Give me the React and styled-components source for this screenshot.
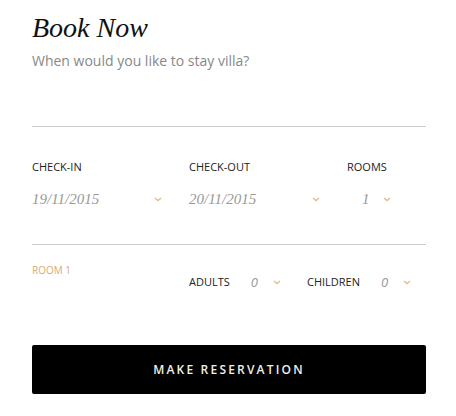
import React from 'react';
import styled, { createGlobalStyle } from 'styled-components';

const GlobalStyle = createGlobalStyle`
  body {
    margin: 0;
    background: #fff;
    font-family: 'Open Sans', sans-serif;
  }
`;

const Panel = styled.div`
  width: 394px;
  padding: 12px 0 0 32px;
`;

const Title = styled.h2`
  margin: 0;
  font-family: 'Liberation Serif', serif;
  font-style: italic;
  font-weight: normal;
  font-size: 28px;
  line-height: 32px;
  color: #111;
`;

const Subtitle = styled.p`
  margin: 7px 0 0;
  font-size: 14px;
  line-height: 20px;
  color: #888;
`;

const Divider = styled.hr`
  margin: ${(p) => p.$top}px 0 0;
  border: 0;
  border-top: 1px solid #ccc;
  width: 394px;
`;

const Fields = styled.div`
  display: grid;
  grid-template-columns: 157px 158px 79px;
  padding-top: 32px;
`;

const Field = styled.div`
  display: flex;
  flex-direction: column;
`;

const Label = styled.span`
  font-size: 11px;
  line-height: 16px;
  text-transform: uppercase;
  color: #222;
`;

const Select = styled.div`
  display: flex;
  align-items: center;
  justify-content: space-between;
  width: ${(p) => p.$width}px;
  margin-top: 14px;
  padding-left: ${(p) => p.$indent || 0}px;
  box-sizing: border-box;
`;

const DateValue = styled.span`
  font-family: 'Liberation Serif', serif;
  font-style: italic;
  font-size: 15px;
  line-height: 20px;
  color: #999;
`;

const Guests = styled.div`
  display: flex;
  align-items: flex-start;
  padding-top: 16px;
  height: 50px;
`;

const RoomName = styled.span`
  width: 157px;
  font-size: 10px;
  line-height: 18px;
  text-transform: uppercase;
  color: #dcaa78;
`;

const Counter = styled.div`
  display: flex;
  align-items: center;
  margin-top: 12px;
  margin-right: ${(p) => p.$gap || 0}px;
`;

const CountValue = styled.span`
  font-style: italic;
  font-size: 13px;
  line-height: 18px;
  color: #999;
  margin-left: ${(p) => p.$offset}px;
  margin-right: 15px;
`;

const Button = styled.button`
  display: block;
  width: 394px;
  height: 49px;
  margin-top: 34px;
  border: 0;
  border-radius: 2px;
  background: #000;
  color: #f2efe6;
  font-family: 'Open Sans', sans-serif;
  font-size: 12px;
  font-weight: 600;
  letter-spacing: 2.2px;
  text-transform: uppercase;
  cursor: pointer;
`;

const Chevron = () => (
  <svg width="8" height="5" viewBox="0 0 8 5">
    <path d="M1 1l3 2.6L7 1" fill="none" stroke="#e2bd88" strokeWidth="1.3" />
  </svg>
);

const App = () => (
  <>
    <GlobalStyle />
    <Panel>
      <Title>Book Now</Title>
      <Subtitle>When would you like to stay villa?</Subtitle>
      <Divider $top={55} />
      <Fields>
        <Field>
          <Label>Check-in</Label>
          <Select $width={130}>
            <DateValue>19/11/2015</DateValue>
            <Chevron />
          </Select>
        </Field>
        <Field>
          <Label>Check-out</Label>
          <Select $width={131}>
            <DateValue>20/11/2015</DateValue>
            <Chevron />
          </Select>
        </Field>
        <Field>
          <Label>Rooms</Label>
          <Select $width={44} $indent={15}>
            <DateValue>1</DateValue>
            <Chevron />
          </Select>
        </Field>
      </Fields>
      <Divider $top={35} />
      <Guests>
        <RoomName>Room 1</RoomName>
        <Counter $gap={26}>
          <Label>Adults</Label>
          <CountValue $offset={21}>0</CountValue>
          <Chevron />
        </Counter>
        <Counter>
          <Label>Children</Label>
          <CountValue $offset={21}>0</CountValue>
          <Chevron />
        </Counter>
      </Guests>
      <Button>Make Reservation</Button>
    </Panel>
  </>
);

export default App;
